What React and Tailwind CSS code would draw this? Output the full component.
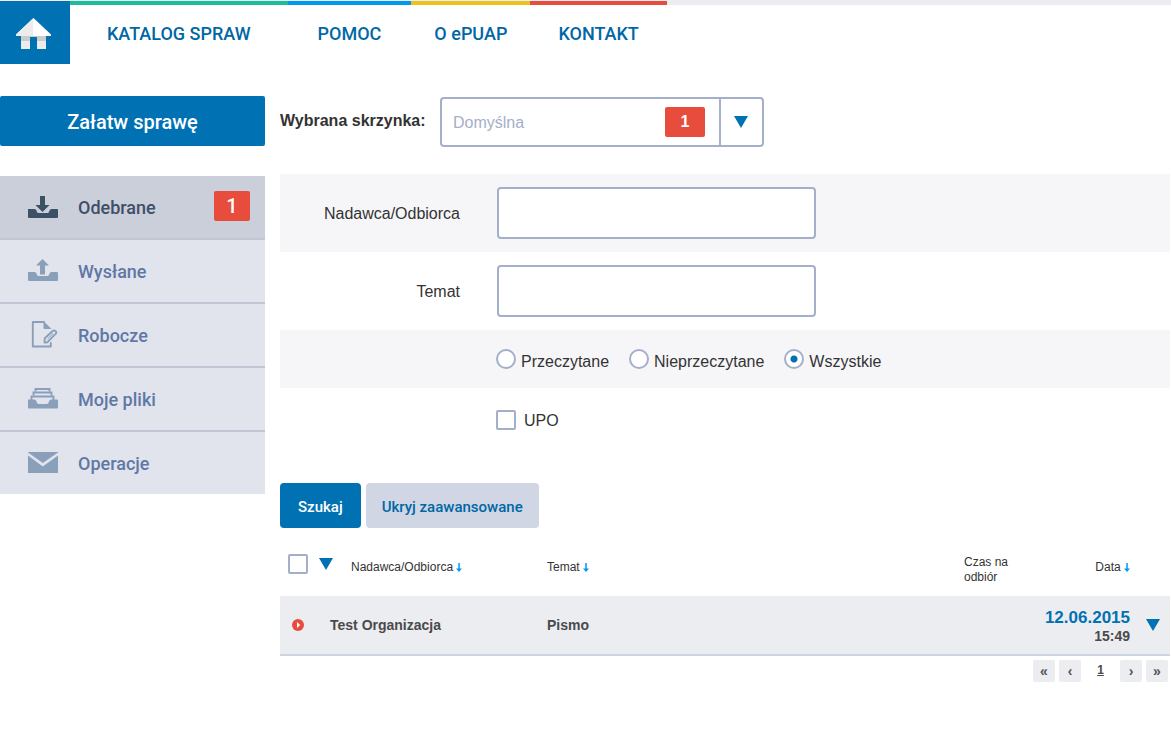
import { useState } from 'react';
import { clsx } from 'clsx';

const navItems = [
  { label: 'KATALOG SPRAW', className: 'border-[#1abc9c] px-[37px]' },
  { label: 'POMOC', className: 'border-[#0099f0] px-[30px]' },
  { label: 'O ePUAP', className: 'border-[#ecc31d] px-[23px]' },
  { label: 'KONTAKT', className: 'border-[#e74c3c] px-7' },
];

const HomeIcon = () => (
  <svg width="36" height="32" viewBox="0 0 36 32" aria-hidden="true">
    <path d="M5 18h9v5H5zM21 18h9v5h-9z" fill="#ccc" />
    <path d="M5 23h9v8H5zM21 23h9v8h-9z" fill="#ececec" />
    <path d="M17.500 0 0 16.500V18h35v-1.500z" fill="#fff" />
    <path d="M17.500 0 0 16.500V18h17z" fill="#ececec" />
    <path d="M14 18h7v1h-7z" fill="#ccc" />
  </svg>
);

const Tray = () => (
  <path d="M0 13h6.500q1.500 0 2 1.500l.5 1.500q.4 1 1.500 1h9q1.100 0 1.500-1l.5-1.500q.5-1.500 2-1.500H29q1 0 1 1v7q0 1-1 1H1q-1 0-1-1z" />
);

const InboxIcon = () => (
  <svg width="30" height="28" viewBox="0 0 30 28" fill="currentColor" aria-hidden="true">
    <g transform="translate(0 3)">
      <path d="M12 0h5v9h4.500L14.500 16 7.500 9H12z" />
      <Tray />
    </g>
  </svg>
);

const OutboxIcon = () => (
  <svg width="30" height="28" viewBox="0 0 30 28" fill="currentColor" aria-hidden="true">
    <g transform="translate(0 2)">
      <path d="M14.500 0 21 6.500h-4V15.500h-5V6.500H8z" />
      <Tray />
    </g>
  </svg>
);

const DraftIcon = () => (
  <svg width="30" height="28" viewBox="0 0 30 28" fill="none" stroke="currentColor" aria-hidden="true">
    <path d="M16 1H4.800v24.500h18V22" strokeWidth="1.900" strokeLinejoin="round" strokeLinecap="round" />
    <path d="M15.500 0 23.500 8h-7q-1 0-1-1z" fill="currentColor" stroke="none" />
    <path d="m16.500 21.500.3-4.200 8.200-7.500q1.300-.9 2.600.3t.2 2.600l-8.300 8.500z" strokeWidth="1.900" strokeLinejoin="round" />
    <path d="m19.500 18 5.500-5.300" strokeWidth="1" />
  </svg>
);

const FilesIcon = () => (
  <svg width="30" height="28" viewBox="0 0 30 28" fill="none" stroke="currentColor" strokeWidth="1.900" aria-hidden="true">
    <path d="M7.500 6.500V4h14v2.500" />
    <path d="M5.500 10.500V7.500h18v3" />
    <path d="M3.500 15v-3.500h22V15" />
    <path d="M0 14.500h6.500q1.200 0 1.700 1.500l1 2.200q.4.800 1.500.8h8q1.100 0 1.500-.8l1-2.200q.5-1.500 1.800-1.500H29q1 0 1 1v7q0 1-1 1H1q-1 0-1-1z" fill="currentColor" stroke="none" />
  </svg>
);

const MailIcon = () => (
  <svg width="30" height="28" viewBox="0 0 30 28" fill="currentColor" aria-hidden="true">
    <path d="M0 3h30v.500L14.800 14 0 3.500z" />
    <path d="M0 6.500l14.800 11L30 6.500V24H0z" />
  </svg>
);

const menuItems = [
  { label: 'Odebrane', Icon: InboxIcon, count: 1 },
  { label: 'Wysłane', Icon: OutboxIcon },
  { label: 'Robocze', Icon: DraftIcon },
  { label: 'Moje pliki', Icon: FilesIcon },
  { label: 'Operacje', Icon: MailIcon },
];

const readOptions = ['Przeczytane', 'Nieprzeczytane', 'Wszystkie'];

const Triangle = () => (
  <svg width="14" height="12" viewBox="0 0 14 12" className="fill-[#0071b3]" aria-hidden="true">
    <path d="M0 0h14L7 12z" />
  </svg>
);

const SortArrow = () => (
  <svg width="6" height="9" viewBox="0 0 6 9" className="inline-block fill-[#0099f0]" aria-hidden="true">
    <path d="M2.300 0h1.500v5.500H6L3 9 0 5.500h2.300z" />
  </svg>
);

const checkboxClass =
  'size-5 shrink-0 appearance-none rounded-xs border-2 border-[#a4afc9] bg-white checked:bg-[#0071b3]';
const inputClass = 'h-13 w-[319px] rounded border-2 border-[#a4afc9] bg-white px-3 outline-none';
const labelClass = 'mr-[37px] w-[180px] pt-0.5 text-right';
const pageButtonClass = 'size-[22px] rounded-xs bg-[#ecedf1] leading-5 text-[#555]';

const Header = () => (
  <header className="flex border-t border-[#ecedf1]">
    <a href="#start" aria-label="Strona główna" className="flex h-[63px] w-[70px] items-center bg-[#0071b3] pt-0.5 pl-4">
      <HomeIcon />
    </a>
    <nav className="flex font-[Roboto,sans-serif] text-lg font-medium text-[#0067a6]">
      {navItems.map((item) => (
        <a key={item.label} href="#nav" className={clsx('border-t-4 pt-[15px]', item.className)}>
          {item.label}
        </a>
      ))}
    </nav>
    <div className="flex-1 border-t-4 border-[#ecedf1]"></div>
  </header>
);

const Sidebar = () => (
  <aside className="w-[265px] shrink-0 font-[Roboto,sans-serif] font-medium">
    <button className="h-[50px] w-full rounded-xs bg-[#0071b3] pt-0.5 text-xl text-white">Załatw sprawę</button>
    <ul className="mt-[30px] divide-y-2 divide-[#c0c6d4] text-lg">
      {menuItems.map(({ label, Icon, count }) => (
        <li key={label}>
          <a
            href="#folder"
            className={clsx(
              'flex h-[62px] items-center pr-[15px] pl-7',
              count ? 'bg-[#cbcfda] text-[#3f4f68]' : 'bg-[#e1e4ec] text-[#5f78a5]'
            )}
          >
            <span className={count ? 'text-[#3c5166]' : 'text-[#8a9fba]'}>
              <Icon />
            </span>
            <span className="ml-5 flex-1 pt-0.5">{label}</span>
            {count && (
              <span className="mb-0.5 h-[30px] w-9 rounded-xs bg-[#e74c3c] text-center text-xl leading-[30px] text-white">
                {count}
              </span>
            )}
          </a>
        </li>
      ))}
    </ul>
  </aside>
);

const SearchForm = () => {
  const [readState, setReadState] = useState('Wszystkie');

  return (
    <form className="text-base text-[#333]" onSubmit={(e) => e.preventDefault()}>
      <div className="flex h-[78px] items-center bg-[#f6f6f9]">
        <label htmlFor="sender" className={labelClass}>Nadawca/Odbiorca</label>
        <input id="sender" type="text" className={inputClass} />
      </div>
      <div className="flex h-[78px] items-center">
        <label htmlFor="subject" className={labelClass}>Temat</label>
        <input id="subject" type="text" className={inputClass} />
      </div>
      <div className="flex h-[58px] items-center gap-5 bg-[#f6f6f9] pt-1.5 pl-[216px]">
        {readOptions.map((option) => (
          <label key={option} className="flex items-start gap-[5px] leading-[26px]">
            <input
              type="radio"
              name="read"
              checked={readState === option}
              onChange={() => setReadState(option)}
              className="size-5 appearance-none rounded-full border-2 border-[#a4afc9] bg-white bg-center bg-no-repeat checked:bg-[radial-gradient(circle,#0071b3_3px,#fff_4px)]"
            />
            {option}
          </label>
        ))}
      </div>
      <div className="flex h-16 items-center pl-[216px]">
        <label className="flex items-center gap-2">
          <input type="checkbox" className={checkboxClass} />
          <span className="pt-0.5">UPO</span>
        </label>
      </div>
      <div className="mt-[31px] flex gap-[5px] font-[Roboto,sans-serif] text-[15px] font-medium">
        <button type="submit" className="h-[45px] rounded bg-[#0071b3] px-[18px] pt-1 text-white">Szukaj</button>
        <button type="button" className="h-[45px] rounded bg-[#d0d6e4] px-4 pt-1 text-[#0067a6]">
          Ukryj zaawansowane
        </button>
      </div>
    </form>
  );
};

const MessageTable = () => (
  <table className="mt-4 w-full table-fixed text-left text-[#4a4a4a]">
    <colgroup>
      <col className="w-[50px]" />
      <col className="w-[217px]" />
      <col />
      <col className="w-[66px]" />
      <col className="w-[100px]" />
      <col className="w-10" />
    </colgroup>
    <thead>
      <tr className="h-[52px] text-xs leading-[15px] text-[#333]">
        <th colSpan={2} className="pb-3 pl-2 font-normal">
          <div className="flex items-center">
            <input type="checkbox" aria-label="Zaznacz wszystkie" className={checkboxClass} />
            <button aria-label="Opcje zaznaczania" className="ml-[11px]">
              <Triangle />
            </button>
            <span className="mt-1.5 ml-[18px]">Nadawca/Odbiorca <SortArrow /></span>
          </div>
        </th>
        <th className="pb-1.5 font-normal">Temat <SortArrow /></th>
        <th className="font-normal">Czas na odbiór</th>
        <th className="pb-1.5 text-right font-normal">Data <SortArrow /></th>
        <th></th>
      </tr>
    </thead>
    <tbody>
      <tr className="h-[59px] border-b-2 border-[#cdd4e3] bg-[#ecedf1] text-sm font-bold">
        <td className="pl-3">
          <svg width="12" height="12" viewBox="0 0 12 12" aria-hidden="true">
            <circle cx="6" cy="6" r="6" fill="#e74c3c" />
            <path d="M5 3v6l3.200-3z" fill="#fff" />
          </svg>
        </td>
        <td>Test Organizacja</td>
        <td>Pismo</td>
        <td></td>
        <td className="pt-1 text-right leading-[18px]">
          <div className="text-[17px] text-[#0071b3]">12.06.2015</div>
          <div>15:49</div>
        </td>
        <td className="pl-4">
          <button aria-label="Opcje wiadomości" className="block">
            <Triangle />
          </button>
        </td>
      </tr>
    </tbody>
  </table>
);

const Pagination = () => (
  <nav className="mt-1 flex justify-end gap-1 pr-[2px] text-sm font-bold" aria-label="Strony">
    <button className={pageButtonClass}>«</button>
    <button className={pageButtonClass}>‹</button>
    <a href="#page-1" className="w-[31px] text-center text-xs leading-5 text-[#4a4a4a] underline">1</a>
    <button className={pageButtonClass}>›</button>
    <button className={pageButtonClass}>»</button>
  </nav>
);

const App = () => (
  <div className="min-h-screen bg-white font-['Liberation_Sans',Arial,sans-serif]">
    <Header />
    <div className="flex gap-[15px] pt-8 pr-px">
      <Sidebar />
      <main className="min-w-0 flex-1">
        <div className="mt-px mb-[27px] flex">
          <label htmlFor="mailbox" className="w-40 pt-3 font-bold text-[#333]">Wybrana skrzynka:</label>
          <div className="relative">
            <select
              id="mailbox"
              className="h-[50px] w-[324px] appearance-none rounded border-2 border-[#a4afc9] bg-white px-[11px] pt-0.5 text-[#a4afc9]"
            >
              <option>Domyślna</option>
            </select>
            <div className="pointer-events-none absolute inset-y-0 right-0 flex items-center">
              <span className="mr-3.5 h-[30px] w-10 rounded-xs bg-[#e74c3c] text-center font-bold leading-[30px] text-white">
                1
              </span>
              <span className="flex h-full w-[45px] items-center justify-center border-l-2 border-[#a4afc9] pr-1">
                <Triangle />
              </span>
            </div>
          </div>
        </div>
        <SearchForm />
        <MessageTable />
        <Pagination />
      </main>
    </div>
  </div>
);

export default App;
